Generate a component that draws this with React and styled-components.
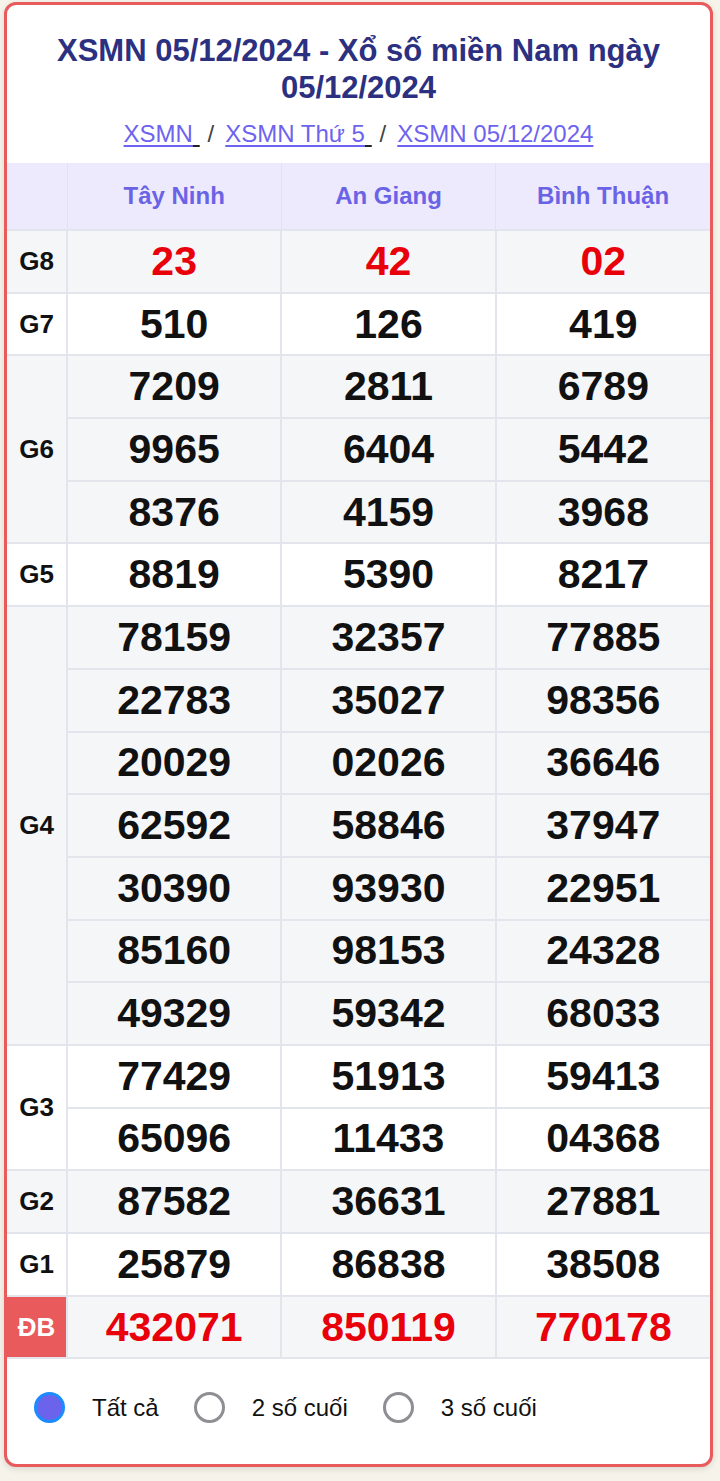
import React, { useState } from 'react';
import styled, { createGlobalStyle } from 'styled-components';

const GlobalStyle = createGlobalStyle`
  body {
    margin: 0;
    background: #f6f3ea;
    font-family: "Liberation Sans", Arial, sans-serif;
  }
`;

const Card = styled.div`
  margin: 2px 7px 16px 4px;
  background: #fff;
  border: 3px solid #e95a5c;
  border-radius: 12px;
  overflow: hidden;
  box-shadow: 0 2px 6px rgba(0, 0, 0, 0.12);
`;

const Header = styled.div`
  padding: 27px 20px 14px;
  text-align: center;
`;

const Title = styled.h1`
  margin: 0;
  font-size: 31px;
  line-height: 37px;
  font-weight: 700;
  color: #2c3081;
`;

const Crumbs = styled.div`
  margin-top: 13px;
  font-size: 24px;
  line-height: 30px;
  color: #333;
`;

const Crumb = styled.a`
  color: #6d63ef;
  text-decoration: underline;
  text-underline-offset: 3px;
`;

const CrumbSpace = styled.span`
  color: #222;
  text-decoration: underline;
  text-underline-offset: 3px;
`;

const Sep = styled.span`
  margin: 0 11px 0 8px;
  color: #444;
`;

const Table = styled.table`
  width: 100%;
  border-collapse: collapse;
  table-layout: fixed;
`;

const HeadCell = styled.th`
  height: 66px;
  padding: 0;
  background: #edeafd;
  border: 1px solid #f3dcdc;
  border-top: none;
  color: #6b63e6;
  font-size: 24px;
  font-weight: 700;
  &:first-child { border-left: none; }
  &:last-child { border-right: none; }
`;

const Row = styled.tr`
  background: ${p => (p.$shade ? '#f5f6f8' : '#fff')};
`;

const LabelCell = styled.td`
  padding: 0;
  text-align: center;
  font-size: 26px;
  font-weight: 700;
  color: ${p => (p.$special ? '#fff' : '#111')};
  background: ${p => (p.$special ? '#e95a5c' : 'transparent')};
  border: 2px solid #e2e5eb;
  border-left: none;
`;

const ValueCell = styled.td`
  height: 60.7px;
  padding: 0;
  text-align: center;
  font-size: 41px;
  font-weight: 700;
  color: ${p => (p.$red ? '#e8000b' : '#111')};
  border: 2px solid #e2e5eb;
  &:last-child { border-right: none; }
`;

const Options = styled.div`
  display: flex;
  align-items: center;
  padding: 33px 0 41px 27px;
`;

const Option = styled.label`
  display: flex;
  align-items: center;
  margin-right: 35px;
  font-size: 24px;
  color: #111;
  cursor: pointer;
`;

const Dot = styled.span`
  box-sizing: border-box;
  width: 31px;
  height: 31px;
  margin-right: 27px;
  border-radius: 50%;
  border: 3px solid ${p => (p.$on ? '#1a8cff' : '#8e8e93')};
  background: ${p => (p.$on ? '#6c63ec' : '#fff')};
`;

const results = [
  { label: 'G8', red: true, rows: [['23', '42', '02']] },
  { label: 'G7', rows: [['510', '126', '419']] },
  { label: 'G6', rows: [['7209', '2811', '6789'], ['9965', '6404', '5442'], ['8376', '4159', '3968']] },
  { label: 'G5', rows: [['8819', '5390', '8217']] },
  {
    label: 'G4',
    rows: [
      ['78159', '32357', '77885'],
      ['22783', '35027', '98356'],
      ['20029', '02026', '36646'],
      ['62592', '58846', '37947'],
      ['30390', '93930', '22951'],
      ['85160', '98153', '24328'],
      ['49329', '59342', '68033'],
    ],
  },
  { label: 'G3', rows: [['77429', '51913', '59413'], ['65096', '11433', '04368']] },
  { label: 'G2', rows: [['87582', '36631', '27881']] },
  { label: 'G1', rows: [['25879', '86838', '38508']] },
  { label: 'ĐB', red: true, special: true, rows: [['432071', '850119', '770178']] },
];

const provinces = ['Tây Ninh', 'An Giang', 'Bình Thuận'];
const modes = ['Tất cả', '2 số cuối', '3 số cuối'];

export default function App() {
  const [mode, setMode] = useState(0);

  return (
    <>
      <GlobalStyle />
      <Card>
        <Header>
          <Title>XSMN 05/12/2024 - Xổ số miền Nam ngày 05/12/2024</Title>
          <Crumbs>
            <Crumb href="#">XSMN<CrumbSpace> </CrumbSpace></Crumb>
            <Sep>/</Sep>
            <Crumb href="#">XSMN Thứ 5<CrumbSpace> </CrumbSpace></Crumb>
            <Sep>/</Sep>
            <Crumb href="#">XSMN 05/12/2024</Crumb>
          </Crumbs>
        </Header>

        <Table>
          <colgroup>
            <col style={{ width: 60 }} />
            <col />
            <col />
            <col />
          </colgroup>
          <thead>
            <tr>
              <HeadCell />
              {provinces.map(p => (
                <HeadCell key={p}>{p}</HeadCell>
              ))}
            </tr>
          </thead>
          <tbody>
            {results.map((g, gi) =>
              g.rows.map((vals, ri) => (
                <Row key={g.label + ri} $shade={gi % 2 === 0}>
                  {ri === 0 && (
                    <LabelCell rowSpan={g.rows.length} $special={g.special}>
                      {g.label}
                    </LabelCell>
                  )}
                  {vals.map((v, vi) => (
                    <ValueCell key={vi} $red={g.red}>
                      {mode === 0 ? v : v.slice(-(mode + 1))}
                    </ValueCell>
                  ))}
                </Row>
              ))
            )}
          </tbody>
        </Table>

        <Options>
          {modes.map((m, i) => (
            <Option key={m} onClick={() => setMode(i)}>
              <Dot $on={mode === i} />
              {m}
            </Option>
          ))}
        </Options>
      </Card>
    </>
  );
}
